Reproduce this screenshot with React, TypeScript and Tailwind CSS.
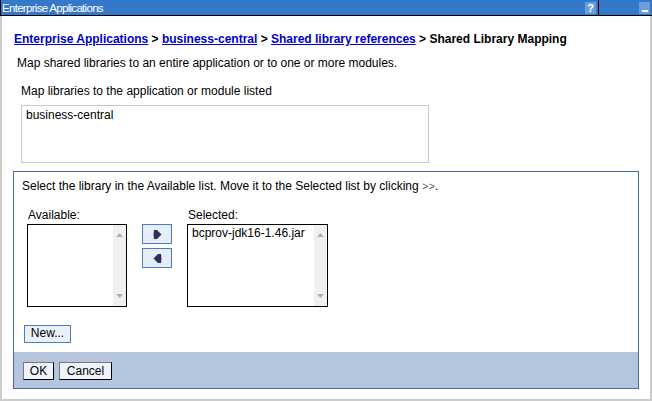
import React from "react";

function ScrollList({ width, items }: { width: string; items: string[] }) {
  return (
    <div className={`relative h-[83px] ${width} border border-black bg-white flex`}>
      <div className="flex-1 pl-[4px] pt-[1px] leading-[15px]">
        {items.map((t) => (
          <div key={t}>{t}</div>
        ))}
      </div>
      <div className="w-[13px] bg-[#f0f0f0] flex flex-col items-center justify-between py-[8px]">
        <svg width="7" height="4" viewBox="0 0 7 4">
          <polygon points="0,4 3.5,0 7,4" fill="#b0b0b0" />
        </svg>
        <svg width="7" height="4" viewBox="0 0 7 4">
          <polygon points="0,0 3.5,4 7,0" fill="#b0b0b0" />
        </svg>
      </div>
    </div>
  );
}

function ArrowBtn({ dir }: { dir: "right" | "left" }) {
  return (
    <div className="w-[30px] h-[20px] border border-[#4d7cbd] bg-[#e4eefb] flex items-center justify-center">
      <svg width="9" height="11" viewBox="0 0 9 11" className="block">
        {dir === "right" ? (
          <polygon points="1,1 4,1 8.5,5.5 4,10 1,10 0.5,5.5" fill="#2f2f55" />
        ) : (
          <polygon points="8,1 5,1 0.5,5.5 5,10 8,10 8.5,5.5" fill="#2f2f55" />
        )}
      </svg>
    </div>
  );
}

export default function App() {
  return (
    <div className="w-[652px] h-[401px] bg-white flex flex-col font-['Liberation_Sans',Arial,sans-serif] text-[12px] text-black">
      {/* Title bar */}
      <div className="h-[16px] bg-[#3479c9] border-b border-l border-black flex items-center shrink-0">
        <span className="text-white text-[11.5px] tracking-[-0.7px] leading-[14px] pl-[1px] flex-1">
          Enterprise Applications
        </span>
        <div className="w-[11px] h-[12px] bg-[#6c9ddb] flex items-center justify-center mr-[2px]">
          <span className="text-white text-[11px] font-bold leading-[10px]">?</span>
        </div>
        <div className="w-[1px] h-full bg-black mr-[40px]" />
        <div className="w-[11px] h-[12px] bg-[#6c9ddb] flex items-end justify-center pb-[2px] mr-[2px]">
          <div className="w-[6px] h-[2px] bg-white" />
        </div>
      </div>

      {/* Content */}
      <div className="flex-1 border-l-2 border-r-2 border-b-2 border-[#cccccc] pl-[11px] pr-[11px] pt-[16px] flex flex-col">
        <div className="font-bold leading-[14px] pl-[1px]">
          <a className="text-[#0000cc] underline">Enterprise Applications</a>
          <span> &gt; </span>
          <a className="text-[#0000cc] underline">business-central</a>
          <span> &gt; </span>
          <a className="text-[#0000cc] underline">Shared library references</a>
          <span> &gt; Shared Library Mapping</span>
        </div>
        <div className="mt-[10px] leading-[14px] pl-[4px]">
          Map shared libraries to an entire application or to one or more modules.
        </div>
        <div className="mt-[14px] leading-[14px] pl-[8px]">
          Map libraries to the application or module listed
        </div>
        <div className="mt-[7px] ml-[8px] w-[408px] h-[58px] border border-[#c8c8c8] pl-[4px] pt-[2px] leading-[14px]">
          business-central
        </div>

        {/* Panel */}
        <div className="mt-[8px] w-[626px] h-[218px] border border-[#4a68a6] flex flex-col">
          <div className="flex-1 flex flex-col pl-[8px]">
            <div className="mt-[7px] leading-[14px]">
              Select the library in the Available list. Move it to the Selected list by clicking{" "}
              <span className="text-[#555] text-[11px]">&gt;&gt;</span>.
            </div>
            <div className="mt-[15px] flex pl-[5px]">
              <div className="flex flex-col">
                <div className="leading-[14px] pl-[1px] mb-[2px]">Available:</div>
                <ScrollList width="w-[100px]" items={[]} />
              </div>
              <div className="flex flex-col gap-[4px] pt-[16px] ml-[15px]">
                <ArrowBtn dir="right" />
                <ArrowBtn dir="left" />
              </div>
              <div className="flex flex-col ml-[15px]">
                <div className="leading-[14px] pl-[1px] mb-[2px]">Selected:</div>
                <ScrollList width="w-[141px]" items={["bcprov-jdk16-1.46.jar"]} />
              </div>
            </div>
            <div className="mt-[17px] pl-[2px]">
              <button className="h-[18px] w-[47px] border border-[#4d7cbd] bg-[#e8f0fc] text-[12px] leading-[14px] pb-[1px]">
                New...
              </button>
            </div>
          </div>
          <div className="h-[36px] bg-[#b5c5de] flex items-center gap-[5px] pl-[9px] pt-[1px]">
            <button className="h-[18px] w-[31px] border border-[#777] border-r-black border-b-black bg-[#eef3fc] text-[12px] leading-[14px]">
              OK
            </button>
            <button className="h-[18px] w-[53px] border border-[#777] border-r-black border-b-black bg-[#eef3fc] text-[12px] leading-[14px]">
              Cancel
            </button>
          </div>
        </div>
      </div>
    </div>
  );
}
